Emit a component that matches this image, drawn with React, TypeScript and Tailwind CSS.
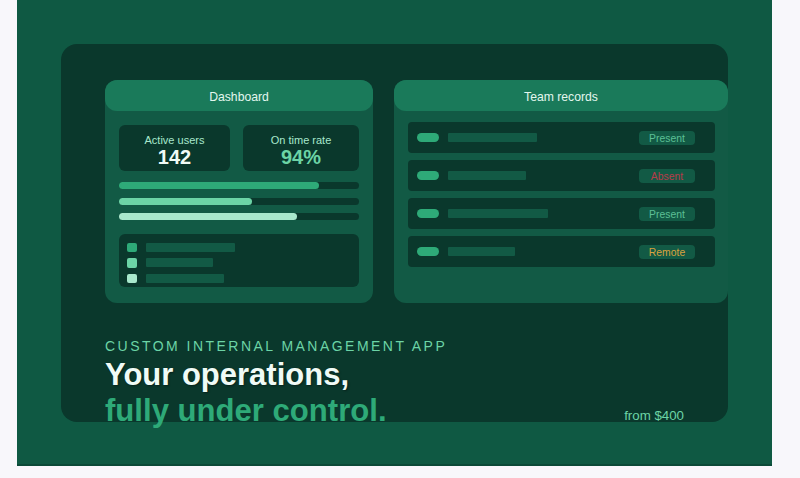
export default function App() {
  const rows = [
    { w: "w-[89px]", t: "Present", c: "text-[#5cc096]" },
    { w: "w-[78px]", t: "Absent", c: "text-[#b83a4a]" },
    { w: "w-[100px]", t: "Present", c: "text-[#5cc096]" },
    { w: "w-[67px]", t: "Remote", c: "text-[#d9a23e]" },
  ];
  const bars = [
    { w: "w-[200px]", c: "bg-[#2eaa78]" },
    { w: "w-[133px]", c: "bg-[#6cd4a6]" },
    { w: "w-[178px]", c: "bg-[#a8e8cc]" },
  ];
  const list = [
    { w: "w-[89px]", c: "bg-[#2eaa78]" },
    { w: "w-[67px]", c: "bg-[#6cd4a6]" },
    { w: "w-[78px]", c: "bg-[#a8e8cc]" },
  ];
  return (
    <div className="h-[478px] w-[800px] overflow-hidden bg-[#f8f7fb] font-['Liberation_Sans',Arial,sans-serif]">
      <div className="ml-[17px] h-[466px] w-[755px] border-b-2 border-[#0b4a38] bg-[#0f5943] pl-[44px] pt-[44px]">
        <div className="flex h-[378px] w-[667px] flex-col rounded-[16px] bg-[#0a382c] pl-[44px] pt-[36px]">
          <div className="flex gap-[21px]">
            <div className="h-[223px] w-[268px] rounded-[12px] bg-[#125a45]">
              <div className="flex h-[31px] items-center justify-center rounded-[12px] bg-[#1a7a5a] pt-[3px] text-[12.2px] text-[#e3f7ee]">Dashboard</div>
              <div className="px-[14px] pt-[14px]">
                <div className="flex gap-[13px]">
                  <div className="flex h-[46px] w-[111px] flex-col items-center rounded-[6px] bg-[#0a382c] pt-[8px]">
                    <div className="text-[11px] leading-[14px] text-[#a8e8cc]">Active users</div>
                    <div className="text-[20px] font-bold leading-[20px] text-[#f0fbf6]">142</div>
                  </div>
                  <div className="flex h-[46px] w-[116px] flex-col items-center rounded-[6px] bg-[#0a382c] pt-[8px]">
                    <div className="text-[11px] leading-[14px] text-[#a8e8cc]">On time rate</div>
                    <div className="text-[20px] font-bold leading-[20px] text-[#6cd4a6]">94%</div>
                  </div>
                </div>
                <div className="mt-[11px] flex flex-col gap-[8.5px]">
                  {bars.map((b, i) => (
                    <div key={i} className="h-[7px] w-[240px] rounded-full bg-[#0a382c]">
                      <div className={`h-[7px] rounded-full ${b.w} ${b.c}`} />
                    </div>
                  ))}
                </div>
                <div className="mt-[14px] flex h-[53px] w-[240px] flex-col gap-[6px] rounded-[6px] bg-[#0a382c] pl-[8px] pt-[8.5px]">
                  {list.map((l, i) => (
                    <div key={i} className="flex items-center gap-[9px]">
                      <div className={`size-[9.5px] rounded-[2px] ${l.c}`} />
                      <div className={`h-[9px] rounded-[1px] bg-[#125a45] ${l.w}`} />
                    </div>
                  ))}
                </div>
              </div>
            </div>
            <div className="h-[223px] w-[334px] rounded-[12px] bg-[#125a45]">
              <div className="flex h-[31px] items-center justify-center rounded-[12px] bg-[#1a7a5a] pt-[3px] text-[12.2px] text-[#e3f7ee]">Team records</div>
              <div className="flex flex-col gap-[7px] pl-[14px] pt-[11px]">
                {rows.map((r, i) => (
                  <div key={i} className="flex h-[31px] w-[307px] items-center rounded-[4px] bg-[#0a382c] pl-[8.5px]">
                    <div className="h-[9.5px] w-[22.5px] rounded-full bg-[#2eaa78]" />
                    <div className={`ml-[9px] h-[9px] rounded-[1px] bg-[#125a45] ${r.w}`} />
                    <div className="ml-auto mr-[20px] flex h-[14px] w-[56px] items-center justify-center rounded-[4px] bg-[#125a45] pt-[2px]">
                      <span className={`text-[10.4px] ${r.c}`}>{r.t}</span>
                    </div>
                  </div>
                ))}
              </div>
            </div>
          </div>
          <div className="mt-[33px] text-[14px] leading-[20px] tracking-[2.47px] text-[#6cd4a6]">CUSTOM INTERNAL MANAGEMENT APP</div>
          <div className="pt-[1px] text-[31px] font-bold leading-[36px] text-[#f0fbf6] [text-shadow:1px_1px_2px_rgba(0,0,0,0.4)]">Your operations,</div>
          <div className="flex items-start justify-between">
            <div className="text-[31.1px] font-bold leading-[36px] text-[#2eaa78]">fully under control.</div>
            <div className="mr-[44px] mt-[13px] text-[13.3px] leading-[20px] text-[#6cd4a6]">from $400</div>
          </div>
        </div>
      </div>
    </div>
  );
}
